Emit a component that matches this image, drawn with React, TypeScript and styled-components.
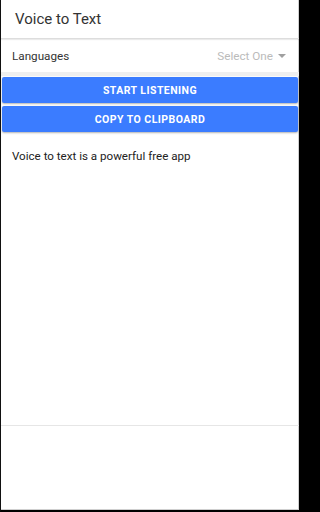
import styled, { createGlobalStyle } from 'styled-components';

const GlobalStyle = createGlobalStyle`
  html, body {
    margin: 0;
    padding: 0;
    background: #000;
  }
  body {
    font-family: Roboto, "Liberation Sans", Arial, sans-serif;
  }
`;

const Frame = styled.div`
  box-sizing: border-box;
  width: 302px;
  height: 512px;
  border-left: 1px solid #111;
  border-right: 3px solid #000;
  border-bottom: 2px solid #000;
  background: #fff;
  display: flex;
  flex-direction: column;
  box-shadow: inset -1px 0 0 #cfcfcf, inset 0 -1px 0 #cfcfcf;
`;

const Header = styled.header`
  height: 38px;
  display: flex;
  align-items: center;
  padding-left: 14px;
  font-size: 15px;
  color: #333;
  border-bottom: 1px solid #ddd;
  box-shadow: 0 1px 1px rgba(0, 0, 0, 0.08);
`;

const Row = styled.div`
  height: 33px;
  display: flex;
  align-items: center;
  justify-content: space-between;
  padding: 0 11px;
  font-size: 11.7px;
  color: #333;
  border-bottom: 4px solid #efefef;
`;

const Picker = styled.div`
  display: flex;
  align-items: center;
  gap: 5px;
  color: #bbb;
  font-size: 11.7px;
  margin-right: 2px;
`;

const Caret = styled.span`
  width: 0;
  height: 0;
  border-left: 4px solid transparent;
  border-right: 4px solid transparent;
  border-top: 4px solid #a0a0a0;
`;

const Buttons = styled.div`
  display: flex;
  flex-direction: column;
  gap: 3px;
  padding: 1px 1px 0 1px;
`;

const Button = styled.button`
  height: 26px;
  border: none;
  border-radius: 2px;
  background: #3b7cff;
  color: #fff;
  font-family: Roboto, "Liberation Sans", Arial, sans-serif;
  font-weight: 700;
  font-size: 10.5px;
  letter-spacing: 0.45px;
  box-shadow: 0 1px 2px rgba(0, 0, 0, 0.3);
  cursor: pointer;
`;

const Body = styled.p`
  margin: 0;
  padding: 17px 11px 0;
  font-size: 11.6px;
  color: #222;
  flex: 1;
`;

const Footer = styled.div`
  height: 84px;
  border-top: 1px solid #e6e6e6;
`;

export default function App() {
  return (
    <>
      <GlobalStyle />
      <Frame>
        <Header>Voice to Text</Header>
        <Row>
          <span>Languages</span>
          <Picker>
            Select One
            <Caret />
          </Picker>
        </Row>
        <Buttons>
          <Button>START LISTENING</Button>
          <Button>COPY TO CLIPBOARD</Button>
        </Buttons>
        <Body>Voice to text is a powerful free app</Body>
        <Footer />
      </Frame>
    </>
  );
}
